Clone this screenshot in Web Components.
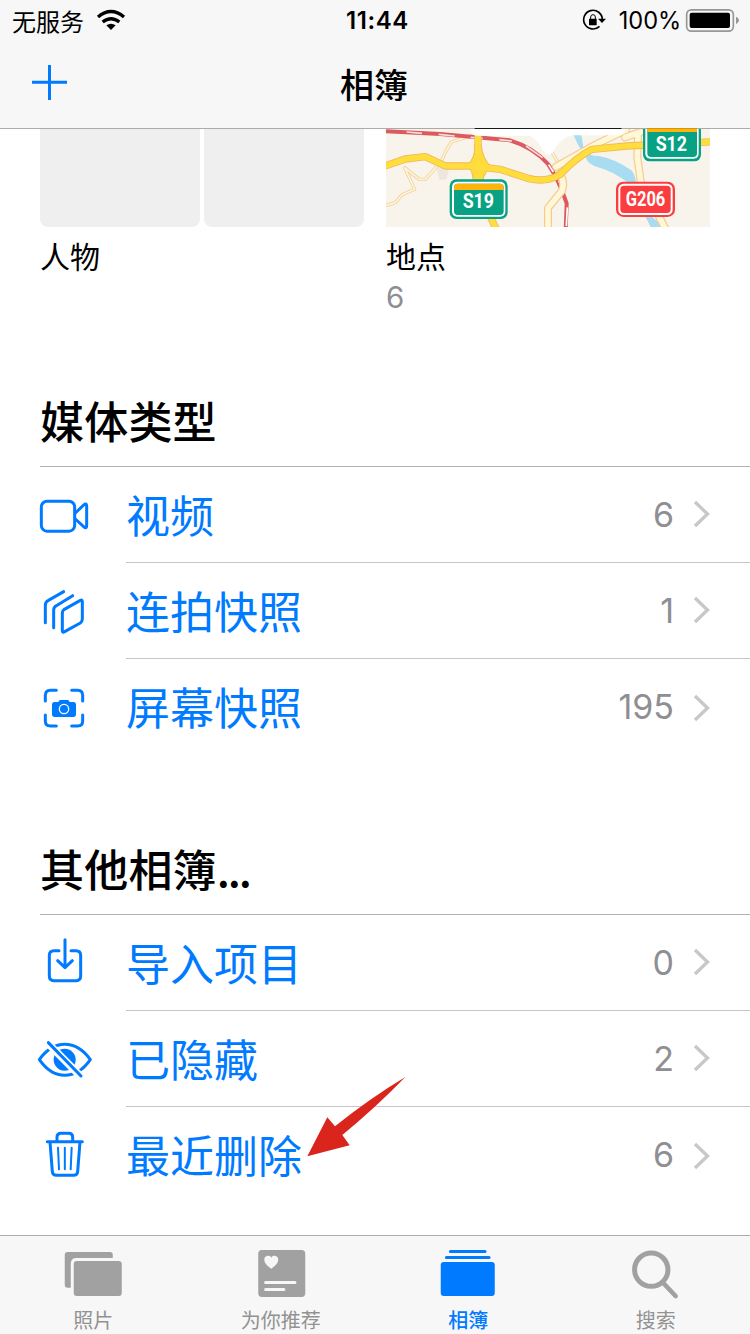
<!DOCTYPE html>
<html lang="zh-CN">
<head>
<meta charset="utf-8">
<title>相簿</title>
<style>
html,body{margin:0;padding:0;background:#fff}
body{width:750px;height:1334px;overflow:hidden;font-family:"Noto Sans CJK SC",sans-serif;color:#000}
</style>
</head>
<body>
<photos-app></photos-app>
<script>
const define = (name, html) => customElements.define(name, class extends HTMLElement {
  constructor() {
    super();
    const t = document.createElement('template');
    t.innerHTML = html;
    this.attachShadow({mode: 'open'}).append(t.content.cloneNode(true));
  }
});

define('status-bar', `
<style>
:host{display:grid;grid-template-columns:346px 1fr auto;height:40px;align-items:center;font:500 23.5px/40px Inter,sans-serif;padding-right:1px}
svg{display:block}
.left,.right{display:flex;align-items:center;height:40px}
.carrier{font:400 24px/41px "Noto Sans CJK SC",sans-serif;margin-left:12px;width:83px;height:40px}
.right{justify-content:flex-end;font-weight:400}
.time{font-weight:600;font-size:24px;letter-spacing:.6px;line-height:42px;height:40px}
.pct{line-height:42px;height:40px;margin-left:9px;width:68px;text-align:center;white-space:nowrap;font-size:23.600px}
</style>
<div class="left"><span class="carrier">无服务</span>
<svg width="32" height="40" viewBox="285 0 96 120"><g fill="none" stroke="#000" stroke-width="10"><path d="M294 51Q333 18 372 51"/><path d="M308 66Q333 46 358 66"/></g><path d="M319 76Q333 66 347 76L333 90Z"/></svg></div>
<span class="time">11:44</span>
<div class="right">
<svg width="26" height="40" viewBox="753 0 78 120"><path d="M808.500 79A28 28 0 1 1 817 59" fill="none" stroke="#000" stroke-width="5"/><path d="M804 56H828L816 69Z"/><path d="M778 56H800V74Q800 76 798 76H779Q777 76 777 74V57Z"/><path d="M782 58V51Q782 44 789 44T796 51V58" fill="none" stroke="#000" stroke-width="3"/></svg>
<span class="pct">100%</span>
<svg width="65" height="40" viewBox="1062 0 195 120"><rect x="1070" y="29.500" width="140" height="64" rx="14" fill="none" stroke="#979797" stroke-width="5"/><rect x="1079" y="38" width="121" height="46" rx="6"/><path d="M1218 50Q1227 54 1227 61T1218 73Z" fill="#979797"/></svg></div>`);

define('nav-bar', `
<style>
:host{display:grid;grid-template-columns:100px 1fr 102px;height:88px;align-items:center;text-align:center;font-size:34px;line-height:88px;font-weight:500}
svg{display:block}
</style>
<svg width="100" height="88" viewBox="0 120 300 264"><path d="M96 247H201M148.500 195V300" stroke="#007aff" stroke-width="9"/></svg>
<span><slot></slot></span>`);

define('people-tiles', `
<style>
:host{display:flex;gap:4px;height:98px}
i{flex:1;background:#efefef;border-radius:0 0 8px 8px}
</style><i></i><i></i>`);

define('map-tile', `
<style>:host{display:block;height:98px}svg{display:block;overflow:visible;clip-path:inset(-1px 0 0 0)}text{font:700 62px Roboto,sans-serif;fill:#fff}</style>
<svg width="324" height="98" viewBox="18 27 972 294">
<rect x="18" y="20" width="972" height="301" fill="#f8f4eb"/>
<path d="M600 20H680L650 36L606 30Z" fill="#e7e9ea"/>
<path d="M574 24L600 20L612 92Q628 108 658 108Q708 118 756 152Q770 174 768 200L812 286L848 321H812L744 188Q700 154 658 143Q618 132 618 112Q588 72 574 24Z" fill="#a8dcf1"/>
<path d="M170 143L208 140L200 178L178 180Z" fill="#ece6dd"/>
<g fill="none" stroke-linecap="round" stroke-linejoin="round">
<g stroke="#f2d19f" stroke-width="10"><path d="M290 42L214 66Q196 92 184 124L136 178H118L74 143L104 208L66 224L46 248L18 256"/><path d="M516 96L532 124"/></g>
<g stroke="#fcf5d8" stroke-width="5"><path d="M290 42L214 66Q196 92 184 124L136 178H118L74 143L104 208L66 224L46 248L18 256"/><path d="M516 96L532 124"/></g>
<path d="M10 33L180 42L390 61Q460 82 504 132Q536 178 560 250L557 330" stroke="#dc5960" stroke-width="12"/>
<path d="M80 36L126 40M176 43L224 48M272 52L308 55M358 59L396 63M438 78L488 113" stroke="#f6dfd8" stroke-width="5" stroke-linecap="butt"/><path d="M506 134L520 156M536 182L546 204M562 262L559 318" stroke="#fff" stroke-width="5" stroke-linecap="butt"/>
<path d="M528 140L650 72L738 30M735 52L782 36M774 48L772 112L782 184L856 326M538 162Q556 184 546 212L504 264V330" stroke="#f4ca91" stroke-width="24"/>
<path d="M528 140L650 72L738 30M735 52L782 36M774 48L772 112L782 184L856 326M538 162Q556 184 546 212L504 264V330" stroke="#fff7d5" stroke-width="17"/>
<path d="M10 140L76 117L136 110L196 138H280L360 148L448 176Q500 188 540 164Q590 112 636 88L740 78L1000 65M294 20V160L298 220L350 330" stroke="#efb85c" stroke-width="22"/>
</g>
<path d="M284 76Q288 110 262 136Q278 152 280 182H308Q314 154 334 142Q306 112 304 76Z" fill="#ffdb38" stroke="#efb85c" stroke-width="3"/>
<path d="M10 140L76 117L136 110L196 138H280L360 148L448 176Q500 188 540 164Q590 112 636 88L740 78L1000 65M294 20V160L298 220L350 330" fill="none" stroke="#ffdd3d" stroke-width="17"/>
<path d="M272 20V35Q275 46 294 47H450Q472 57 486 88Q508 120 524 88Q546 50 580 46H720Q736 42 736 20Z" fill="#fff"/>
<g><rect x="209" y="178" width="174" height="119" rx="20" fill="#08a184"/><rect x="216" y="185" width="160" height="105" rx="15" fill="#fff"/><rect x="222" y="191" width="149" height="94" rx="11" fill="#08a184"/><path d="M222 210V202Q222 191 233 191H360Q371 191 371 202V210Z" fill="#ffb40b"/><text x="248" y="265" textLength="94" lengthAdjust="spacingAndGlyphs">S19</text></g>
<g><rect x="789" y="-8" width="174" height="132" rx="20" fill="#08a184"/><rect x="796" y="0" width="160" height="116" rx="15" fill="#fff"/><rect x="802" y="0" width="149" height="111" rx="11" fill="#08a184"/><path d="M802 20H951V36H802Z" fill="#ffb40b"/><text x="827" y="93" textLength="94" lengthAdjust="spacingAndGlyphs">S12</text></g>
<g><rect x="708" y="185" width="177" height="106" rx="22" fill="#fb3d40"/><rect x="715" y="191" width="163" height="94" rx="16" fill="#fff"/><rect x="721" y="197" width="151" height="82" rx="11" fill="#fb3d40"/><text x="737" y="259" textLength="119" lengthAdjust="spacingAndGlyphs" style="font-size:58px">G206</text></g>
<path d="M18 24H990V27H18Z" fill="#acaaa6"/><path d="M284 24H724V27H284Z" fill="#14191b"/><path d="M802 24H951V27H802Z" fill="#d3930b"/>
</svg>`);

define('album-card', `
<style>
:host{display:block;width:324px}
.name{font-size:30px;line-height:56px;height:51px}
.count{font:400 29.500px/38px Inter,sans-serif;color:#8e8e93}
</style><slot name="cover"></slot><div class="name"><slot></slot></div><div class="count"><slot name="count"></slot></div>`);

define('section-title', `
<style>
:host{display:block;height:88px;line-height:84px;font-size:44px;font-weight:500;margin-left:40px;border-bottom:1px solid #b2b2b2;letter-spacing:.2px}
</style><slot></slot>`);

define('album-row', `
<style>
:host{display:flex;height:96px;padding-left:36px;color:#007aff}
.icon{width:60px;height:95px;margin-right:30px}
.body{flex:1;display:flex;height:95px;border-bottom:1px solid #c8c7cc}
:host([last]) .body{border-color:transparent}
.label{flex:1;font-size:44px;line-height:94px;white-space:nowrap}
.count{font:400 34px/96px Inter,sans-serif;color:#8e8e93;margin-right:19px}
svg{display:block;margin:32px 38px 0 0}
:host([last]) svg{margin-top:34px}
</style>
<div class="icon"><slot name="icon"></slot></div>
<div class="body"><span class="label"><slot></slot></span><span class="count"><slot name="count"></slot></span>
<svg width="19" height="30" viewBox="0 0 19 30"><path d="M2 3L14.500 15L2 27" fill="none" stroke="#c7c7cc" stroke-width="3.300"/></svg></div>`);

const glyphs = {
  video: ['48 261 180 285', '<rect x="64" y="363.500" width="100" height="90" rx="17"/><path d="M166 399L191 375Q200 367 200 378V437Q200 448 191 440L166 417"/>'],
  burst: ['48 -21 180 285', '<path d="M76 158V106Q76 96 84 92L131 65"/><path d="M101 173V121Q101 111 109 107L158 77"/><path d="M127 129Q127 122 133 118L181 91Q187 87 187 96V147Q187 155 181 159L134 185Q127 189 127 182Z"/>'],
  screenshot: ['48 267 180 285', '<path d="M76 393V376Q76 361 91 361H109M155 361H173Q188 361 188 376V393M188 435V453Q188 468 173 468H155M109 468H91Q76 468 76 453V435"/><path fill="#007aff" stroke="none" d="M104 396H115L119 390H145L149 396H160Q168 396 168 404V433Q168 441 160 441H104Q96 441 96 433V404Q96 396 104 396Z"/><circle cx="132" cy="417" r="14" stroke="#fff" stroke-width="4"/>'],
  imported: ['48 255 180 285', '<path d="M117 362H102Q88 362 88 376V438Q88 452 102 452H168Q182 452 182 438V376Q182 362 168 362H153"/><path d="M135 329V412M113 392L135 413L157 392"/>'],
  hidden: ['48 -12 180 285', '<path d="M58 134Q91 88 134 88Q178 88 211 134Q178 181 134 181Q91 181 58 134Z"/><circle cx="134" cy="134" r="33" fill="#007aff" stroke="none"/><path d="M76 77L190 192" stroke="#fff" stroke-width="23" stroke-linecap="butt"/><path d="M85 83L183 183"/>'],
  trash: ['48 276 180 285', '<path d="M82 380H187M111 378V367Q111 355 123 355H146Q158 355 158 367V378M90 381L97 470Q98 481 109 481H161Q172 481 173 470L180 381"/><path d="M114 398L117 463M134.500 398V463M155 398L152 463" stroke-width="6"/>'],
  photos: ['168.750 33 225 198', '<g fill="#a1a1a1" stroke="none"><path d="M204 81H331Q339 81 339 89V99H230Q213 99 213 116V188H204Q195 188 195 179V90Q195 81 204 81Z"/><rect x="222" y="108" width="144" height="105" rx="9"/></g>'],
  foryou: ['731.250 33 225 198', '<rect x="774" y="75" width="141" height="141" rx="11" fill="#a1a1a1" stroke="none"/><path fill="#f7f7f7" stroke="none" d="M813 131Q792 117 792 104C792 90 810 90 813 98C816 90 834 90 834 104Q834 117 813 131Z"/><path d="M796 172.500H884M796 193.500H851" stroke="#f7f7f7" stroke-width="9"/>'],
  albums: ['168.750 33 225 198', '<path d="M227 79.500H331M215 97.500H343" stroke-width="9"/><rect x="198" y="111" width="162" height="102" rx="9" fill="#007aff" stroke="none"/>'],
  search: ['731.250 33 225 198', '<g stroke="#a1a1a1"><circle cx="828" cy="134" r="50" stroke-width="15"/><path d="M864 174L901 213" stroke-width="14"/></g>']
};
customElements.define('app-icon', class extends HTMLElement {
  constructor() {
    super();
    this.attachShadow({mode: 'open'});
  }
  connectedCallback() {
    const [box, art] = glyphs[this.getAttribute('name')];
    const [, , w, h] = box.split(' ');
    this.shadowRoot.innerHTML = `<style>:host{display:block}svg{display:block}</style><svg width="${w / 3}" height="${h / 3}" viewBox="${box}" fill="none" stroke="#007aff" stroke-width="9" stroke-linecap="round" stroke-linejoin="round">${art}</svg>`;
  }
});

define('tab-item', `
<style>
:host{display:flex;flex-direction:column;align-items:center;flex:1;color:#929292;font-size:20px;line-height:35px;white-space:nowrap}
:host([active]){color:#007aff;font-weight:500}
span{padding-right:1px}
</style><slot name="icon"></slot><span><slot></slot></span>`);

define('pointer-arrow', `
<style>:host{display:block;position:absolute;left:300px;top:1070px}svg{display:block}</style>
<svg width="110" height="92" viewBox="840 165 330 276"><path fill="#da251c" d="M1156 186Q1070 275 967 360L989 391L862 424L922 307L945 334Q1048 251 1156 186Z"/></svg>`);

define('photos-app', `
<style>
:host{display:flex;flex-direction:column;width:750px;height:1334px;position:relative;background:#fff;overflow:hidden}
header{background:#f7f7f7;border-bottom:1px solid #acacac;height:128px}
main{flex:1;min-height:0}
.cards{display:flex;gap:22px;padding-left:40px;height:249px}
.other{margin-top:71px}
.dots{letter-spacing:-2.2px}
footer{display:flex;height:98px;background:#f7f7f7;border-top:1px solid #acacac}
</style>
<header><status-bar></status-bar><nav-bar>相簿</nav-bar></header>
<main>
<div class="cards">
<album-card><people-tiles slot="cover"></people-tiles>人物</album-card>
<album-card><map-tile slot="cover"></map-tile>地点<span slot="count">6</span></album-card>
</div>
<section>
<section-title>媒体类型</section-title>
<album-row><app-icon slot="icon" name="video"></app-icon>视频<span slot="count">6</span></album-row>
<album-row><app-icon slot="icon" name="burst"></app-icon>连拍快照<span slot="count">1</span></album-row>
<album-row last><app-icon slot="icon" name="screenshot"></app-icon>屏幕快照<span slot="count">195</span></album-row>
</section>
<section class="other">
<section-title>其他相簿<span class="dots">...</span></section-title>
<album-row><app-icon slot="icon" name="imported"></app-icon>导入项目<span slot="count">0</span></album-row>
<album-row><app-icon slot="icon" name="hidden"></app-icon>已隐藏<span slot="count">2</span></album-row>
<album-row last><app-icon slot="icon" name="trash"></app-icon>最近删除<span slot="count">6</span></album-row>
</section>
</main>
<footer>
<tab-item><app-icon slot="icon" name="photos"></app-icon>照片</tab-item>
<tab-item><app-icon slot="icon" name="foryou"></app-icon>为你推荐</tab-item>
<tab-item active><app-icon slot="icon" name="albums"></app-icon>相簿</tab-item>
<tab-item><app-icon slot="icon" name="search"></app-icon>搜索</tab-item>
</footer>
<pointer-arrow></pointer-arrow>`);
</script>
</body>
</html>
